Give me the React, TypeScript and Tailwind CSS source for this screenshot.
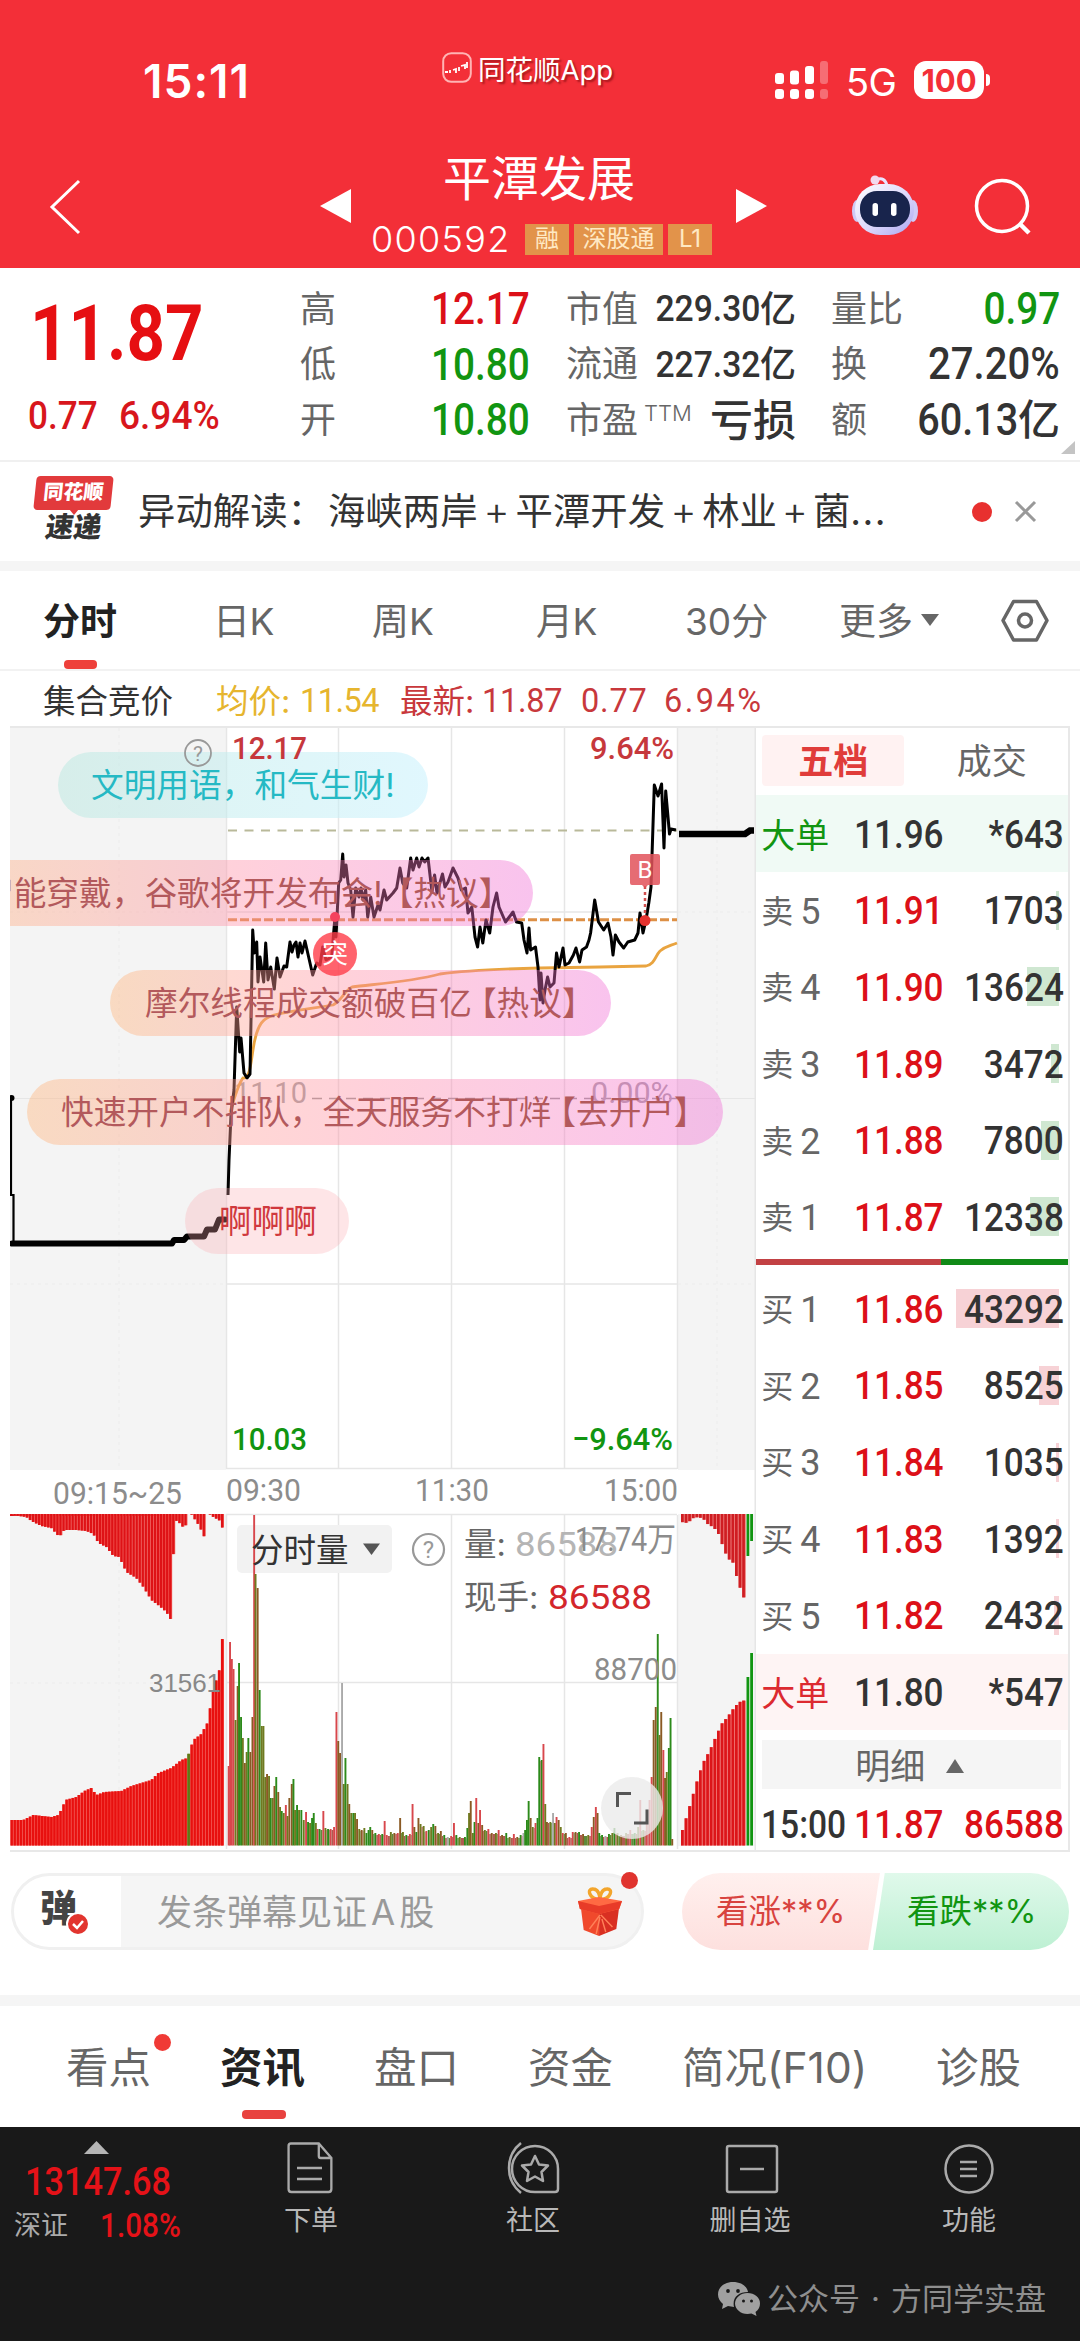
import React from "react";

const CJK = "font-['Inter','Noto_Sans_CJK_SC',sans-serif]";
const DIN = "font-['Roboto','Noto_Sans_CJK_SC',sans-serif]";

const RED = "#dc1018";
const GREEN = "#119511";

/* ---------- header ---------- */

function AppLogo() {
  return (
    <svg width="30" height="31" viewBox="0 0 30 31" fill="none">
      <rect x="1.2" y="1.2" width="27.6" height="28.6" rx="8" stroke="#ffb4b4" strokeWidth="2" />
      <path d="M3 20h3M8 21v-3M11 18l3-1v4M17 15v4M19 14l4-1v4M25 10v6" stroke="#fff" strokeWidth="1.8" />
    </svg>
  );
}

function Signal() {
  return (
    <svg width="54" height="39" viewBox="0 0 54 39" fill="#fff">
      <rect x="0" y="12" width="9" height="11" rx="3" />
      <rect x="15" y="9.500" width="9" height="14" rx="3" />
      <rect x="30" y="5" width="9" height="18" rx="3" />
      <rect x="45" y="0" width="8" height="23" rx="3" opacity=".3" />
      <rect x="0" y="28" width="9" height="10" rx="3" />
      <rect x="15" y="28" width="9" height="10" rx="3" />
      <rect x="30" y="28" width="9" height="10" rx="3" />
      <rect x="45" y="28" width="8" height="10" rx="3" opacity=".3" />
    </svg>
  );
}

function Robot() {
  return (
    <svg width="68" height="64" viewBox="0 0 68 64">
      <defs>
        <linearGradient id="helmet" x1="0" y1="0" x2="1" y2="1">
          <stop offset="0" stopColor="#ffffff" />
          <stop offset=".55" stopColor="#dcd8fb" />
          <stop offset="1" stopColor="#a9a4f0" />
        </linearGradient>
      </defs>
      <path d="M25 7c6-3 10 0 11 6" stroke="#e9e4ff" strokeWidth="3" fill="none" />
      <circle cx="24" cy="7" r="4.500" fill="#f3d9ee" />
      <ellipse cx="6" cy="38" rx="5" ry="11" fill="#cfcaf6" />
      <ellipse cx="62" cy="38" rx="5" ry="11" fill="#cfcaf6" />
      <rect x="4" y="11" width="59" height="51" rx="25" fill="url(#helmet)" />
      <rect x="9" y="18" width="50" height="36" rx="17" fill="#18244c" />
      <rect x="21.500" y="30" width="5.500" height="13" rx="2.700" fill="#fff" />
      <rect x="40" y="30" width="5.500" height="13" rx="2.700" fill="#fff" />
    </svg>
  );
}

function Tag({ children, w }: { children: string; w: string }) {
  return (
    <span className={`${w} h-[31px] bg-[#e2934a] text-[#ffe9c4] text-[24px] leading-[30px] text-center`}>{children}</span>
  );
}

function Header() {
  return (
    <header className="h-[268px] bg-[#f32f38] text-white">
      <div className="flex h-[108px] pt-[52px]">
        <div className="w-[299px] pl-[143px] pt-[2px] text-[46px] leading-[54px] font-semibold tracking-[1px]">15:11</div>
        <div className="w-[333px] pl-[143px] flex items-start gap-[6px]">
          <AppLogo />
          <span className="text-[27.500px] leading-[36px] whitespace-nowrap [text-shadow:2px_2px_2px_rgba(90,0,0,.5)]">同花顺App</span>
        </div>
        <div className="pl-[143px] pt-[9px] flex items-start">
          <Signal />
          <span className="ml-[17px] w-[68px] text-[38px] leading-[42px] tracking-[-.5px]">5G</span>
          <span className="w-[70px] h-[38px] rounded-[12px] bg-white text-[#f32f38] text-[31px] leading-[39px] text-center font-bold">100</span>
          <span className="ml-[2px] mt-[13px] w-[4px] h-[12px] rounded-r-full bg-white" />
        </div>
      </div>
      <div className="flex h-[160px]">
        <svg className="ml-[48px] mt-[70px]" width="36" height="58" viewBox="0 0 36 58" fill="none" stroke="#fff" strokeWidth="3">
          <path d="M31 3L4 29l27 26" />
        </svg>
        <svg className="ml-[236px] mt-[80px]" width="32" height="36" viewBox="0 0 32 36" fill="#fff"><path d="M0 18L31 1v34z" /></svg>
        <div className="w-[383px] pt-[39px]">
          <div className="text-[48px] leading-[64px] pl-[91px]">平潭发展</div>
          <div className="flex items-center h-[50px] pl-[19px] mt-[3px]">
            <span className="w-[154px] text-[36px] leading-[50px] font-light whitespace-nowrap tracking-[1.300px]">000592</span>
            <span className="flex gap-[5px]">
              <Tag w="w-[44px]">融</Tag>
              <Tag w="w-[89px]">深股通</Tag>
              <Tag w="w-[44px]">L1</Tag>
            </span>
          </div>
        </div>
        <svg className="mt-[80px]" width="32" height="36" viewBox="0 0 32 36" fill="#fff"><path d="M32 18L1 1v34z" /></svg>
        <div className="ml-[84px] mt-[65px]"><Robot /></div>
        <svg className="ml-[55px] mt-[69px]" width="58" height="60" viewBox="0 0 58 60" fill="none" stroke="#fff" strokeWidth="3.500">
          <circle cx="28" cy="29" r="25.500" />
          <path d="M46 47l9 9" strokeWidth="4.500" />
        </svg>
      </div>
    </header>
  );
}

/* ---------- quote ---------- */

function QuoteRow(p: { a: string; av: string; ac: string; b: string; sup?: string; bv: React.ReactNode; c: string; cv: React.ReactNode; cc: string }) {
  return (
    <div className="flex h-[55.5px] items-center whitespace-nowrap">
      <span className="w-[99px] text-[36px] text-[#666]">{p.a}</span>
      <span className={`w-[131px] text-right text-[45px] font-medium ${DIN} ${p.ac}`}><span className="inline-block origin-right scale-x-[.86]">{p.av}</span></span>
      <span className="ml-[36px] text-[36px] text-[#666] flex">{p.b}{p.sup && <span className="text-[22px] leading-[40px] font-light ml-[6px]">{p.sup}</span>}</span>
      <span className={`flex-1 flex justify-end items-center font-medium text-[#333] ${DIN}`}>{p.bv}</span>
      <span className="ml-[35px] w-[74px] text-[36px] text-[#666]">{p.c}</span>
      <span className={`w-[155px] flex justify-end items-center font-medium text-[44px] ${DIN} ${p.cc}`}>{p.cv}</span>
    </div>
  );
}

function Quote() {
  return (
    <section className="relative flex h-[194px] border-b-[2px] border-[#f0f0f0]">
      <div className="w-[300px] text-[#e60f12]">
        <div className={`pl-[30px] pt-[18px] h-[118px] text-[78px] leading-[96px] font-bold ${DIN}`}>
          <span className="inline-block origin-left scale-x-[.86]">11.87</span>
        </div>
        <div className={`flex pl-[28px] text-[39px] leading-[60px] font-medium text-[#d8161c] ${DIN}`}>
          <span className="w-[91px]"><span className="inline-block origin-left scale-x-[.9]">0.77</span></span>
          <span className="inline-block origin-left scale-x-[.95]">6.94%</span>
        </div>
      </div>
      <div className="w-[760px] pt-[13px]">
        <QuoteRow a="高" av="12.17" ac="text-[#dc1018]" b="市值"
          bv={<><span className="inline-block origin-right scale-x-[.91] text-[37px]">229.30</span><span className={`text-[36px] ${CJK}`}>亿</span></>}
          c="量比" cv={<span className="inline-block origin-right scale-x-[.88]">0.97</span>} cc="text-[#119511]" />
        <QuoteRow a="低" av="10.80" ac="text-[#119511]" b="流通"
          bv={<><span className="inline-block origin-right scale-x-[.91] text-[37px]">227.32</span><span className={`text-[36px] ${CJK}`}>亿</span></>}
          c="换" cv={<span className="inline-block origin-right scale-x-[.91]">27.20%</span>} cc="text-[#333]" />
        <QuoteRow a="开" av="10.80" ac="text-[#119511]" b="市盈" sup="TTM"
          bv={<span className={`text-[43px] leading-[50px] ${CJK}`}>亏损</span>}
          c="额" cv={<><span className="inline-block origin-right scale-x-[.9]">60.13</span><span className={`text-[42px] leading-[50px] ${CJK}`}>亿</span></>} cc="text-[#333]" />
      </div>
      <svg className="absolute right-[5px] bottom-[6px]" width="14" height="13" fill="#c4c4c4"><path d="M14 0v13H0z" /></svg>
    </section>
  );
}

function News() {
  return (
    <section className="flex h-[109px] border-b-[10px] border-[#f5f5f5] items-center text-[#333] whitespace-nowrap">
      <div className="w-[138px] pl-[35px] -mt-[1px] self-start pt-[15px]">
        <div className="relative w-[77px] h-[34px]">
          <div className="absolute inset-0 bg-[#e23a3c] rounded-[4px] -skew-x-[6deg]" />
          <div className="absolute left-[34px] bottom-[-5px] border-x-[5px] border-x-transparent border-t-[6px] border-t-[#e23a3c]" />
          <div className="relative text-center text-white text-[20px] leading-[33px] font-black -skew-x-[6deg]">同花顺</div>
        </div>
        <div className="w-[77px] text-center text-[28px] leading-[35px] font-black -skew-x-[8deg]">速递</div>
      </div>
      <div className="flex-1 text-[37.400px] pt-[1px] flex">
        <span>异动解读：</span>
        <span className="ml-[3px]">海峡两岸</span><span className="w-[38px] text-center text-[40px] leading-[54px] font-light">+</span>
        <span>平潭开发</span><span className="w-[37px] text-center text-[40px] leading-[54px] font-light">+</span>
        <span>林业</span><span className="w-[36px] text-center text-[40px] leading-[54px] font-light">+</span>
        <span>菌</span><span className="tracking-[1.500px]">...</span>
      </div>
      <span className="w-[20px] h-[20px] rounded-full bg-[#e8302f]" />
      <svg className="ml-[22px] mr-[43px]" width="23" height="23" viewBox="0 0 23 23" stroke="#999" strokeWidth="3"><path d="M2 2l19 19M21 2L2 21" /></svg>
    </section>
  );
}

function ChartTabs() {
  return (
    <section className="flex h-[100px] border-b-[2px] border-[#f2f2f2] text-[37px] leading-[102px] text-[#666] whitespace-nowrap">
      <span className="relative ml-[43px] w-[170px] font-bold text-[#222]">
        分时
        <span className="absolute left-[21px] bottom-0 w-[33px] h-[9px] rounded-[4px] bg-[#ee403a]" />
      </span>
      <span className="w-[159px] tracking-[-.5px]">日K</span>
      <span className="w-[164px]">周K</span>
      <span className="w-[149px] tracking-[-.5px]">月K</span>
      <span className="w-[154px]">30分</span>
      <span>更多</span>
      <svg className="ml-[8px] mt-[43px]" width="18" height="12" fill="#666"><path d="M0 0h18L9 12z" /></svg>
      <svg className="ml-[61px] mt-[28px]" width="50" height="44" viewBox="0 0 50 44" fill="none" stroke="#666" strokeWidth="3.500" strokeLinejoin="round">
        <path d="M13.500 2.500h23L47 21.500 36.500 41h-23L3 21.500z" />
        <circle cx="25" cy="21.500" r="6.500" />
      </svg>
    </section>
  );
}

function Legend() {
  return (
    <section className="flex h-[56px] pl-[43px] text-[32.500px] leading-[61px] whitespace-nowrap text-[#c8383c]">
      <span className="w-[173px] text-[#333]">集合竞价</span>
      <span className="w-[84px] text-[#e6b52e]">均价:</span>
      <span className={`w-[100px] text-[#e6b52e] tracking-[-.5px] ${DIN}`}>11.54</span>
      <span className="w-[82px]">最新:</span>
      <span className={`w-[99px] tracking-[-.3px] ${DIN}`}>11.87</span>
      <span className={`w-[83px] tracking-[.8px] ${DIN}`}>0.77</span>
      <span className={`tracking-[2.500px] ${DIN}`}>6.94%</span>
    </section>
  );
}

/* ---------- chart ---------- */

const PRICE =
  "228,1195 229,1160 231,1115 234,1090 236.7,1007 239.7,1052 241,1038 244,1073 247,1078 250,1074 252.7,930 254.3,953 256.7,942 258,982 260,957 263.7,982 265.7,943 268,980 270.7,967 274.3,989 277,958 280,977 284,966 286.7,967 290,942 292,952 294,945 296,942 298,957 300,943 302,953 305,941 310,963 312.7,975 316.7,963 320,965 322.7,947 326,960 331.7,957 334.7,920 336,937 338.7,883 340.7,880 342.7,854 344,877 346,865 348,883 350.7,890 353,917 355.7,888 359,897 361,888 363,900 365.7,890 367.7,917 370.7,897 374,917 378,905 380,910 384,890 386.7,900 393,893 396.7,888 400,868 402.7,883 406.7,888 410.7,858 413,870 416.7,858 419,867 422,858 424.7,862 428,858 432,892 434.6,875 437,893 442.5,874 445,887 448,882 453,868 458,878 461.4,890 465.5,888 468,913 471.8,907 475,937 477.6,947 480,927 482.8,943 486,920 489.7,933 493,907 496.6,893 499,907 505.5,922 513,912 516.5,922 521.7,923 524,940 527,953 529,928 530.6,950 535.5,947 538,967 540,1000 541,973 543,1003 545,990 547.6,977 550,987 554,983 556.5,953 559,967 563,948 565,965 569,963 573.4,955 576,948 579.6,962 582,950 586.5,947 589,940 590.6,933 594.7,900 598.5,922 603.7,930 608,923 611,937 613,955 615.4,935 619,942 623.7,948 627.8,942 634.7,940 638,933 640,913 643,933 646,920 648.8,903 651,887 654.3,785 658,796 661.6,784 664,848 665.7,791 669.5,834 671,829 676,830";

/* [x, top, hue] of each turnover bar: r up, g down, m mixed, b blended, n flat */
const VOLUME: [number, number, string][] = [
  [228.6,1766,"r"],[230,1642,"r"],[231.8,1659,"r"],[233.5,1669,"r"],[235.5,1720,"m"],[237.6,1686,"b"],[239,1663,"g"],[241,1717,"g"],[242.8,1738,"m"],[244.8,1763,"b"],[246.6,1752,"m"],[248.3,1738,"g"],[250.3,1752,"b"],[252.4,1717,"b"],[254.1,1515,"r"],[255.5,1574,"m"],[257.6,1588,"b"],[259.6,1690,"g"],[261.7,1726,"m"],[263.4,1726,"m"],[265.2,1777,"m"],[267,1774,"b"],[269,1776,"m"],[270.7,1798,"g"],[272.7,1798,"m"],[274.4,1786,"b"],[276.2,1777,"g"],[278.2,1792,"b"],[280,1807,"m"],[281.7,1811,"g"],[283.7,1813,"m"],[285.8,1805,"r"],[287.5,1816,"m"],[289.3,1798,"b"],[291.7,1784,"b"],[293.4,1779,"g"],[295,1810,"m"],[297,1805,"g"],[299,1810,"m"],[301.3,1810,"g"],[303.7,1820,"m"],[306,1812,"r"],[308,1822,"g"],[310,1823,"m"],[312,1818,"g"],[313.7,1813,"g"],[315.8,1823,"m"],[317.5,1829,"r"],[319.5,1829,"g"],[323.3,1811,"r"],[325.4,1828,"m"],[328,1829,"g"],[330.6,1829,"r"],[334,1827,"r"],[336.4,1712,"r"],[338.2,1741,"b"],[340,1753,"b"],[342,1683,"n"],[343.7,1784,"m"],[345.4,1758,"g"],[347.5,1784,"m"],[349.2,1804,"b"],[351.2,1813,"m"],[353.3,1813,"g"],[355,1813,"m"],[357,1819,"b"],[359.2,1829,"m"],[361.6,1830,"b"],[364.3,1828,"m"],[366.4,1833,"g"],[368.5,1830,"g"],[370.2,1827,"g"],[372.2,1830,"b"],[375.3,1833,"g"],[378.8,1834,"r"],[382.2,1834,"g"],[384.6,1821,"r"],[386.7,1835,"r"],[390.8,1832,"m"],[394.3,1833,"b"],[397.7,1833,"r"],[400.1,1818,"b"],[402.9,1832,"m"],[406.3,1835,"g"],[409.8,1834,"r"],[412.5,1804,"r"],[414.3,1827,"b"],[416.3,1832,"g"],[418.4,1818,"b"],[420.5,1824,"m"],[423.6,1826,"m"],[426.3,1831,"r"],[428.7,1830,"g"],[431.1,1827,"m"],[433.2,1824,"g"],[435.3,1826,"b"],[438,1833,"m"],[440.8,1831,"b"],[444.2,1835,"g"],[447.7,1837,"n"],[451.1,1836,"r"],[453.9,1823,"r"],[456.3,1835,"g"],[459.7,1837,"m"],[464.9,1837,"g"],[467.3,1828,"g"],[469,1813,"m"],[470.7,1801,"b"],[472.8,1833,"m"],[474.5,1822,"g"],[476.2,1798,"r"],[478.3,1823,"b"],[480,1810,"r"],[482.1,1825,"b"],[484.8,1830,"m"],[488.3,1829,"r"],[491.7,1833,"b"],[495.9,1833,"m"],[498.6,1830,"r"],[502,1835,"b"],[506.2,1833,"g"],[509.6,1837,"m"],[513.8,1834,"r"],[517.2,1837,"b"],[520.6,1835,"g"],[523.4,1833,"n"],[525.1,1830,"g"],[526.9,1820,"g"],[528.6,1801,"g"],[530.6,1818,"b"],[532.7,1827,"m"],[535.5,1823,"r"],[537.5,1818,"g"],[539.2,1757,"g"],[541.7,1760,"g"],[543.4,1744,"r"],[545.2,1804,"m"],[546.9,1822,"b"],[550.3,1822,"m"],[553,1813,"n"],[554.8,1823,"m"],[556.5,1817,"r"],[558.6,1820,"b"],[560.7,1827,"m"],[562.7,1833,"r"],[565.8,1833,"b"],[569.3,1837,"r"],[572.7,1832,"r"],[575.5,1832,"b"],[579,1832,"g"],[583,1834,"b"],[588.2,1835,"m"],[591.7,1827,"r"],[593.7,1817,"b"],[595.8,1807,"r"],[597.5,1813,"b"],[599.2,1833,"g"],[602,1835,"g"],[605.4,1836,"n"],[608.9,1834,"g"],[612.3,1833,"m"],[614.4,1828,"g"],[617.5,1833,"m"],[621,1835,"b"],[626,1833,"m"],[630.2,1830,"r"],[634.7,1833,"g"],[638.1,1827,"m"],[640.2,1800,"r"],[643.3,1830,"m"],[646.7,1820,"r"],[649.5,1800,"r"],[651.6,1777,"r"],[653.6,1720,"b"],[655.7,1707,"b"],[657.7,1634,"g"],[659.5,1735,"m"],[661.2,1712,"b"],[663.3,1750,"r"],[665,1778,"b"],[666.7,1772,"m"],[668.8,1748,"g"],[670.5,1718,"g"],[672.2,1839,"b"],
];
const HUE: Record<string, string> = { r: "#d8474c", g: "#2c8a1a", m: "#6f7a20", b: "#8a5a24", n: "#aaaaaa" };

type P = [number, number];
function at(points: P[], x: number) {
  for (let i = 1; i < points.length; i++) {
    const [x0, y0] = points[i - 1];
    const [x1, y1] = points[i];
    if (x <= x1) return y0 + ((y1 - y0) * (x - x0)) / (x1 - x0);
  }
  return points[points.length - 1][1];
}
function bars(from: number, to: number, step: number) {
  const xs: number[] = [];
  for (let x = from; x < to; x += step) xs.push(x);
  return xs;
}

const PRE_TOP: P[] = [[10,1515],[25,1517],[30,1521],[40,1526],[50,1528],[58,1537],[63,1530],[75,1530],[85,1531],[92,1534],[97,1543],[105,1547],[112,1556],[118,1557],[125,1572],[135,1578],[142,1587],[150,1600],[158,1606],[165,1612],[171.5,1623],[172.5,1517],[176,1522],[180,1524],[183,1530],[187,1516],[190,1514],[192,1517],[198,1526],[203,1537],[204.5,1514],[208,1514],[212,1517],[219,1521],[222,1531],[226,1531]];
const PRE_BOT: P[] = [[10,1820],[22,1820],[32,1815],[50,1817],[57,1815],[61,1808],[64,1800],[75,1797],[83,1791],[90,1788],[95,1795],[103,1792],[120,1791],[130,1786],[150,1780],[157,1773],[170,1768],[180,1760],[186,1758],[192,1740],[200,1734],[206,1723],[209,1707],[212,1690],[218,1670],[220,1650],[222,1627],[226,1627]];
const POST_TOP: P[] = [[680,1522],[686,1523],[692,1518],[697,1517],[702,1519],[707,1525],[712,1527],[717,1534],[722,1548],[726,1558],[733,1564],[736,1582],[741,1593],[744,1604],[746,1604]];
const POST_BOT: P[] = [[681,1830],[685,1817],[690,1800],[697,1776],[702,1762],[709,1749],[716,1733],[720,1724],[726,1717],[733,1707],[738,1702],[744,1700],[746,1700]];

function Bar({ x, y, b, w, c }: { x: number; y: number; b: number; w: number; c: string }) {
  return <rect x={x} y={y} width={w} height={b - y} fill={c} />;
}

function Label({ x, y, w, c, s = 32, wt = 500, children }: { x: number; y: number; w: number; c: string; s?: number; wt?: number; children: string }) {
  return (
    <text x={x} y={y} textLength={w} lengthAdjust="spacingAndGlyphs" fill={c} fontSize={s} fontWeight={wt}>{children}</text>
  );
}

function Danmu({ className, children }: { className: string; children: React.ReactNode }) {
  return (
    <div className={`absolute h-[66px] rounded-full text-[32.700px] leading-[66px] whitespace-nowrap ${className}`}>{children}</div>
  );
}

const WARM = "bg-gradient-to-r from-[#ffb67c]/42 via-[#ff8ba5]/40 to-[#f069d4]/40 text-[#b3595c]";

function Chart() {
  return (
    <div className="relative w-[747px] h-[1122px] overflow-hidden">
      <svg width="747" height="1122" viewBox="10 728 747 1122" className="font-['Roboto','Noto_Sans_CJK_SC',sans-serif]">
        <g fill="#f4f4f4">
          <rect x="10" y="728" width="216" height="742" />
          <rect x="678" y="728" width="78" height="742" />
          <rect x="10" y="1514" width="216" height="332" />
          <rect x="678" y="1514" width="78" height="332" />
        </g>
        <g stroke="#e6e6e6" strokeWidth="1.500" fill="none">
          <path d="M226.500 728V1469M338.500 728V1469M451.500 728V1469M564.500 728V1469M677.500 728V1469" />
          <path d="M226.500 1515V1849M338.500 1515V1849M451.500 1515V1849M564.500 1515V1849M677.500 1515V1849" />
          <path d="M226 912H677M226 1284H677M226 1468.500H677M226 1514.500H677M226 1682.500H677" />
          <path d="M755.500 728V1850" strokeWidth="2" />
        </g>
        <path d="M10 1284H226M119 728V1470M10 912H226M717 728V1470M678 1284H755M678 912H755M119 1514V1846M10 1683H226" stroke="#ececec" strokeDasharray="3 4" />
        <path d="M10 1098.500H226M678 1098.500H755" stroke="#e6e6e6" />
        <path d="M312 1098.500H677" stroke="#999" strokeWidth="1.500" strokeDasharray="10 7" />
        <path d="M228 830.500H677" stroke="#b9b99a" strokeWidth="1.800" strokeDasharray="9 7.500" />
        <path d="M228 919.800H677" stroke="#dd9046" strokeWidth="3" strokeDasharray="9 3" />

        <Label x={234} y={1103} w={73} c="#a0a0a0" s={30} wt={400}>11.10</Label>
        <Label x={591} y={1103} w={82} c="#a8a0a8" s={30} wt={400}>0.00%</Label>

        <path d="M230 1112C234 1100 238 1084 243 1078C250 1079 251 1062 253 1050C257 1022 264 1018 274 1015C300 1009 318 1008 333 1005C342 1000 345 990 352 987C375 984 410 982 440 974C470 970 500 969 540 968L600 967L646 966C655 964 655 956 660 951C666 946 670 946 677 943" fill="none" stroke="#e9a440" strokeWidth="2.800" />
        <polyline points={PRICE} fill="none" stroke="#000" strokeWidth="3" strokeLinejoin="round" />
        <path d="M11 1097V1195H13.500V1243" fill="none" stroke="#000" strokeWidth="2.200" />
        <circle cx="11.500" cy="1098" r="3" />
        <path d="M12 1243.500H172L174 1240H184L187 1236.500H204L207 1229.500H215L219 1219.500H225" fill="none" stroke="#000" strokeWidth="6" strokeLinecap="round" strokeLinejoin="round" />
        <path d="M679 834H745L750 830.500H754" fill="none" stroke="#000" strokeWidth="6.500" />

        <path d="M645 886V914" stroke="#d2504f" strokeWidth="2.500" strokeDasharray="3 3" />
        <path d="M630 856q0-2 2-2h26q2 0 2 2v27q0 2-2 2h-10l-3 3-3-3h-10q-2 0-2-2z" fill="#e2525a" fillOpacity=".85" />
        <text x="645" y="878" textAnchor="middle" fontSize="24" fill="#fff">B</text>
        <circle cx="645" cy="920.500" r="5.500" fill="#e5322f" />

        <Label x={232} y={1450} w={75} c={GREEN}>10.03</Label>
        <Label x={572} y={1450} w={101} c={GREEN}>−9.64%</Label>
        <Label x={53} y={1504} w={129} c="#8c8c8c" wt={400}>09:15~25</Label>
        <Label x={226} y={1501} w={75} c="#8c8c8c" wt={400}>09:30</Label>
        <Label x={415} y={1501} w={74} c="#8c8c8c" wt={400}>11:30</Label>
        <Label x={604} y={1501} w={74} c="#8c8c8c" wt={400}>15:00</Label>

        <rect x="237" y="1525" width="155" height="48" rx="5" fill="#f2f2f2" />
        <rect x="10" y="1514" width="162" height="2" fill={RED} />
        {bars(10.5, 223, 3.05).map((x) => {
          const gap = (x > 187 && x < 190) || (x > 204.5 && x < 208);
          const g = x > 186.5 && x < 189.6;
          return (
            <g key={x}>
              {!gap && <Bar x={x} y={1514} b={at(PRE_TOP, x)} w={3.05} c="#f0504c" />}
              {!gap && <Bar x={x} y={1514} b={at(PRE_TOP, x)} w={2.2} c="#de1216" />}
              <Bar x={x} y={at(PRE_BOT, x)} b={1845.5} w={3.05} c={g ? "#7a7a22" : "#f4453f"} />
              <Bar x={x} y={at(PRE_BOT, x)} b={1845.5} w={2.3} c={g ? "#5d7a16" : "#e8100f"} />
            </g>
          );
        })}
        {bars(681, 745, 3.6).map((x) => (
          <g key={x}>
            <Bar x={x} y={1514} b={at(POST_TOP, x)} w={3.6} c="#ee7a78" />
            <Bar x={x} y={1514} b={at(POST_TOP, x)} w={2.7} c="#cf1d22" />
            <Bar x={x} y={at(POST_BOT, x)} b={1845.5} w={3.6} c="#f07674" />
            <Bar x={x} y={at(POST_BOT, x)} b={1845.5} w={2.7} c="#dc1519" />
          </g>
        ))}
        <Bar x={746.5} y={1514} b={1556} w={2.8} c={GREEN} />
        <Bar x={750.2} y={1514} b={1541} w={2.8} c={GREEN} />
        <Bar x={746.5} y={1677} b={1845.5} w={2.8} c={GREEN} />
        <Bar x={750.2} y={1653} b={1845.5} w={2.8} c={GREEN} />
        {VOLUME.map(([x, y, h], i) => {
          const next = VOLUME[i + 1]?.[0] ?? x + 1.8;
          return (
            <g key={i}>
              <Bar x={x - 0.9} y={y} b={1845.5} w={1.9} c={HUE[h]} />
              {next - x > 2.4 && <Bar x={x + 1} y={Math.max(y, VOLUME[i + 1][1]) + 1} b={1845.5} w={next - x - 1.9} c={i % 3 ? "#b05a50" : "#5f8a3a"} />}
            </g>
          );
        })}

        <g className="font-['Inter','Noto_Sans_CJK_SC',sans-serif]">
          <text x="251" y="1562" fontSize="32.500" fill="#333">分时量</text>
          <text x="464" y="1556" fontSize="32.500" fill="#666">量:</text>
          <text x="464" y="1609" fontSize="32.500" fill="#666">现手:</text>
        </g>
        <path d="M363 1543.500h17l-8.500 11.500z" fill="#555" />
        <circle cx="428.500" cy="1549.500" r="15.500" fill="none" stroke="#999" strokeWidth="2.200" />
        <text x="428.500" y="1558" textAnchor="middle" fontSize="24" fill="#999">?</text>
        <Label x={515} y={1556} w={103} c="#b5b5b5" s={34} wt={400}>86588</Label>
        <Label x={575} y={1551} w={101} c="#8c8c8c" s={33} wt={400}>17.74万</Label>
        <Label x={548} y={1609} w={104} c="#d3262b" s={34} wt={400}>86588</Label>
        <Label x={594} y={1680} w={83} c="#8c8c8c" wt={400}>88700</Label>
        <text x="149" y="1692" fontSize="26" fill="#888" textLength="72" className="font-['Liberation_Sans']">31561</text>

        <circle cx="632" cy="1808" r="31" fill="#ebebeb" fillOpacity=".8" />
        <path d="M617.500 1807V1793.500H631M634 1823H647V1809.500" fill="none" stroke="#555" strokeWidth="3" />
      </svg>

      <Danmu className="left-[48px] top-[24px] w-[370px] pl-[33px] bg-gradient-to-r from-[#b9e8e0]/50 to-[#ccf2fd]/60 text-[#25b9c4]">文明用语，和气生财!</Danmu>
      <Danmu className={`-left-[60px] top-[132px] w-[583px] pl-[31px] ${WARM}`}>智能穿戴，谷歌将开发布会!<span className="-ml-[2px]">【热议】</span></Danmu>
      <Danmu className={`left-[100px] top-[242px] w-[501px] pl-[35px] ${WARM}`}>摩尔线程成交额破百亿<span className="-ml-[8px]">【热议】</span></Danmu>
      <Danmu className={`left-[17px] top-[351px] w-[696px] pl-[34px] ${WARM}`}>快速开户不排队，全天服务不打烊<span className="-ml-[8px]">【去开户】</span></Danmu>
      <Danmu className="left-[175px] top-[460px] w-[164px] pl-[34px] bg-[#fca8b0]/30 text-[#d0393e]">啊啊啊</Danmu>
      <div className="absolute left-[303px] top-[204px] w-[44px] h-[44px] rounded-full bg-[#ff3c48]/80 text-white text-[26px] leading-[43px] text-center">突</div>
      <div className="absolute left-[320px] top-[184px] w-[10px] h-[10px] rounded-full bg-[#f5425e]" />
      <svg className="absolute left-0 top-0 font-['Roboto',sans-serif]" width="747" height="45" viewBox="10 728 747 45">
        <circle cx="198" cy="753" r="13" fill="none" stroke="#999" strokeWidth="1.800" />
        <text x="198" y="760.500" textAnchor="middle" fontSize="21" fill="#999">?</text>
        <Label x={232} y={758.5} w={75} c="#c6383c">12.17</Label>
        <Label x={590} y={758.5} w={84} c="#c6383c">9.64%</Label>
      </svg>
    </div>
  );
}

/* ---------- order book ---------- */

const SELL: [string, string, string, string][] = [
  ["卖 5", "11.91", "1703", "w-[3px]"],
  ["卖 4", "11.90", "13624", "w-[32px]"],
  ["卖 3", "11.89", "3472", "w-[8px]"],
  ["卖 2", "11.88", "7800", "w-[18px]"],
  ["卖 1", "11.87", "12338", "w-[29px]"],
];
const BUY: [string, string, string, string][] = [
  ["买 1", "11.86", "43292", "w-[103px]"],
  ["买 2", "11.85", "8525", "w-[20px]"],
  ["买 3", "11.84", "1035", "w-[3px]"],
  ["买 4", "11.83", "1392", "w-[3px]"],
  ["买 5", "11.82", "2432", "w-[5px]"],
];

function BookRow({ label, price, vol, lc, pc, bar = "", bg = "", vc = "text-[#333]" }: { label: React.ReactNode; price: string; vol: string; lc: string; pc: string; bar?: string; bg?: string; vc?: string }) {
  return (
    <div className={`relative flex h-[76.7px] items-center pt-[3px] pl-[5px] pr-[4px] text-[39px] font-medium whitespace-nowrap ${DIN} ${bg}`}>
      {bar && <span className={`absolute right-[9px] top-[19px] h-[39px] ${bar}`} />}
      <span className={`w-[93px] ${lc}`}>{label}</span>
      <span className={`w-[88px] ${pc}`}><span className="inline-block origin-left scale-x-[.9]">{price}</span></span>
      <span className={`relative flex-1 flex justify-end ${vc}`}><span className="inline-block origin-right scale-x-[.9]">{vol}</span></span>
    </div>
  );
}

function Level({ label, price, vol, bar }: { label: string; price: string; vol: string; bar: string }) {
  const [a, b] = label.split(" ");
  return (
    <BookRow
      label={<span className="flex items-center gap-[7px] font-normal"><span className={`text-[32px] ${CJK}`}>{a}</span><span className="text-[36px]">{b}</span></span>}
      price={price} vol={vol} bar={bar} lc="text-[#666]" pc="text-[#dc1018]"
    />
  );
}

function Book() {
  return (
    <div className="w-[312px] flex flex-col">
      <div className="flex h-[67px] pt-[7px] pl-[6px] text-[35px] leading-[53px] text-center">
        <span className="w-[142px] h-[51px] rounded-[4px] bg-[#fff2f2] text-[#e03c3a] font-bold">五档</span>
        <span className="flex-1 text-[#666] pl-[11px]">成交</span>
      </div>
      <BookRow label={<span className={`text-[34px] font-normal ${CJK}`}>大单</span>} price="11.96" vol="*643" lc="text-[#119511]" pc="text-[#333]" bg="bg-[#f0faf5]" />
      {SELL.map(([l, p, v, w]) => <Level key={l} label={l} price={p} vol={v} bar={`${w} bg-[#cfe7d1]`} />)}
      <div className="flex h-[6px] mt-[4px] mb-[5px]"><span className="w-[185px] bg-[#c24144]" /><span className="flex-1 bg-[#118a17]" /></div>
      {BUY.map(([l, p, v, w]) => <Level key={l} label={l} price={p} vol={v} bar={`${w} bg-[#f7d2d6]`} />)}
      <BookRow label={<span className={`text-[34px] font-normal ${CJK}`}>大单</span>} price="11.80" vol="*547" lc="text-[#dc2a30]" pc="text-[#333]" bg="bg-[#fef4f4]" />
      <div className="mt-[10px] ml-[6px] w-[299px] h-[49px] bg-[#f5f5f5] flex items-center pt-[2px] pl-[93px] text-[35px] text-[#666]">
        明细
        <svg className="ml-[21px]" width="18" height="14" fill="#666"><path d="M9 0l9 14H0z" /></svg>
      </div>
      <div className="h-[59px] overflow-hidden">
        <div className="-mt-[4px]">
          <BookRow label={<span className="inline-block origin-left scale-x-[.86]">15:00</span>} price="11.87" vol="86588" lc="text-[#333]" pc="text-[#dc1018]" vc="text-[#dc1018]" />
        </div>
      </div>
    </div>
  );
}

/* ---------- comment bar ---------- */

function Gift() {
  return (
    <svg width="46" height="50" viewBox="0 0 48 50" preserveAspectRatio="none">
      <path d="M24 13C12 12 10 1 17 2c5 0 7 6 7 11zM24 13c12-1 14-12 7-11-5 0-7 6-7 11z" fill="none" stroke="#f3a52c" strokeWidth="3.500" />
      <path d="M4 20l19 6v23L7 43z" fill="#f0492c" />
      <path d="M44 20l-21 6v23l18-7z" fill="#d92f22" />
      <path d="M1 14l22-4 24 4-3 8-21 5-20-5z" fill="#ff6a43" />
      <path d="M1 14l22 5 24-5-3 8-21 5-20-5z" fill="#e83b28" />
      <path d="M24 28l-11 14M24 30l-4 17M25 28l12 12M26 32l4 13" stroke="#ff8058" strokeWidth="1.500" />
    </svg>
  );
}

function CommentBar() {
  return (
    <section className="flex h-[155px] pt-[22px] border-b-[11px] border-[#f5f5f5] whitespace-nowrap">
      <div className="relative ml-[11px] w-[633px] h-[77px] rounded-full border-[3px] border-[#f0f0f0] bg-[#f5f5f5]">
        <div className="flex h-full items-center overflow-hidden rounded-full">
          <div className="w-[107px] h-full bg-white pl-[26px] text-[37px] leading-[66px] font-black text-[#444]">弹</div>
          <span className="w-[419px] pl-[36px] pt-[2px] text-[35px] text-[#999]">发条弹幕见证<span className="mx-[4px]">A</span>股</span>
          <div className="pl-[37px]"><Gift /></div>
        </div>
        <svg className="absolute left-[52px] top-[36px]" width="24" height="24" viewBox="0 0 24 24">
          <circle cx="12" cy="12" r="11" fill="#e2352f" stroke="#fff" strokeWidth="2" />
          <path d="M7 12l4 4 6-7" fill="none" stroke="#fff" strokeWidth="2.500" />
        </svg>
        <span className="absolute right-[3px] -top-[4px] w-[17px] h-[17px] rounded-full bg-[#e0342f]" />
      </div>
      <div className="ml-[38px] w-[198px] h-[77px] rounded-l-full bg-gradient-to-b from-[#fff0ee] to-[#fde0de] [clip-path:polygon(0_0,100%_0,94%_100%,0_100%)] pl-[34px] text-[32.500px] leading-[77px] text-[#d8433f]">看涨**%</div>
      <div className="-ml-[7px] w-[196px] h-[77px] rounded-r-full bg-gradient-to-b from-[#e0f9eb] to-[#bdf0d3] [clip-path:polygon(6%_0,100%_0,100%_100%,0_100%)] pl-[34px] text-[32.500px] leading-[77px] text-[#119511]">看跌**%</div>
    </section>
  );
}

function InfoTabs() {
  return (
    <section className="flex h-[121px] text-[42.500px] leading-[123px] text-[#666] whitespace-nowrap">
      <span className="relative ml-[66px] w-[154px]">
        看点
        <span className="absolute left-[88px] top-[28px] w-[17px] h-[17px] rounded-full bg-[#f03a36]" />
      </span>
      <span className="relative w-[154px] font-bold text-[#222]">
        资讯
        <span className="absolute left-[22px] bottom-[8px] w-[44px] h-[9px] rounded-[4px] bg-[#e8423f]" />
      </span>
      <span className="w-[154px]">盘口</span>
      <span className="w-[154px]">资金</span>
      <span className="w-[254px]">简况(F10)</span>
      <span>诊股</span>
    </section>
  );
}

/* ---------- bottom bar ---------- */

function NavItem({ label, m, children }: { label: string; m: string; children: React.ReactNode }) {
  return (
    <div className={`flex flex-col items-center w-[100px] ${m}`}>
      <svg width="60" height="56" viewBox="0 0 60 56" fill="none" stroke="#aaa" strokeWidth="2.500">{children}</svg>
      <span className="mt-[4px] text-[27px] leading-[40px] text-[#b8b8b8]">{label}</span>
    </div>
  );
}

function BottomBar() {
  return (
    <footer className="h-[214px] bg-[#191919]">
      <div className="flex h-[140px] whitespace-nowrap">
        <div className="w-[192px] pt-[14px] text-[#e51218]">
          <svg className="ml-[84px]" width="25" height="13" fill="#b5b5b5"><path d="M12.500 0L25 13H0z" /></svg>
          <div className={`mt-[4px] pl-[25px] text-[39px] leading-[48px] font-medium ${DIN}`}><span className="inline-block origin-left scale-x-[.88]">13147.68</span></div>
          <div className="flex items-center h-[40px] pl-[14px]">
            <span className="w-[86px] text-[27px] text-[#aaa]">深证</span>
            <span className={`text-[33px] font-medium ${DIN}`}><span className="inline-block origin-left scale-x-[.9]">1.08%</span></span>
          </div>
        </div>
        <div className="flex pt-[14px]">
          <NavItem label="下单" m="ml-[69px]">
            <path d="M6 5q0-2.500 2.500-2.500H38.500L52 17V48q0 3-3 3H9q-3 0-3-3zM38.500 2.500V15q0 2 2 2H52" transform="translate(2 0) scale(.93 1)" />
            <path d="M16 27h25M16 38h25" />
          </NavItem>
          <NavItem label="社区" m="ml-[122px]">
            <path d="M32 5a23 23 0 1 0 0 46h20q3 0 3-3V28A23 23 0 0 0 32 5z" />
            <path d="M18 2a32 32 0 0 0 0 50" />
            <path d="M32 15l4 8.500 9 1-6.500 6.500 1.500 9-8-4.500-8 4.500 1.500-9-6.500-6.500 9-1z" strokeLinejoin="round" />
          </NavItem>
          <NavItem label="删自选" m="ml-[117px]">
            <rect x="7" y="5" width="50" height="46" rx="2" />
            <path d="M20 28h24" />
          </NavItem>
          <NavItem label="功能" m="ml-[119px]">
            <circle cx="30" cy="28" r="23.500" />
            <path d="M21 21h17M21 28h17M21 35h17" />
          </NavItem>
        </div>
      </div>
      <div className="flex justify-end items-center pr-[34px] h-[64px] text-[31px] text-[#8f8f8f] whitespace-nowrap">
        <svg width="42" height="34" viewBox="0 0 42 34" fill="#a0a0a0">
          <path d="M15 0C6 0 0 5.500 0 12.500c0 4 2 7 5 9.500l-1 5 6-3 6 1C14 16 20 10 30 10 29 4 23 0 15 0z" />
          <path d="M42 21.500c0-6-5.500-10.500-12.500-10.500S17 16 17 21.500 22.500 32 29.500 32l4-.5 5 2.500-1-4c3-2 4.500-5 4.500-8.500z" />
          <g fill="#191919"><circle cx="10" cy="9" r="1.900" /><circle cx="20" cy="9" r="1.900" /><circle cx="25.500" cy="19" r="1.500" /><circle cx="33.500" cy="19" r="1.500" /></g>
        </svg>
        <span className="ml-[7px]">公众号</span><span className="w-[31px] text-center">·</span><span>方同学实盘</span>
      </div>
    </footer>
  );
}

export default function App() {
  return (
    <div className={`w-[1080px] h-[2341px] bg-white overflow-hidden ${CJK}`}>
      <Header />
      <Quote />
      <News />
      <ChartTabs />
      <Legend />
      <section className="ml-[10px] w-[1060px] h-[1126px] flex border-y-[2px] border-r-[2px] border-[#e8e8e8] -mt-px">
        <Chart />
        <Book />
      </section>
      <div className="-mt-px"><CommentBar /></div>
      <InfoTabs />
      <BottomBar />
    </div>
  );
}
